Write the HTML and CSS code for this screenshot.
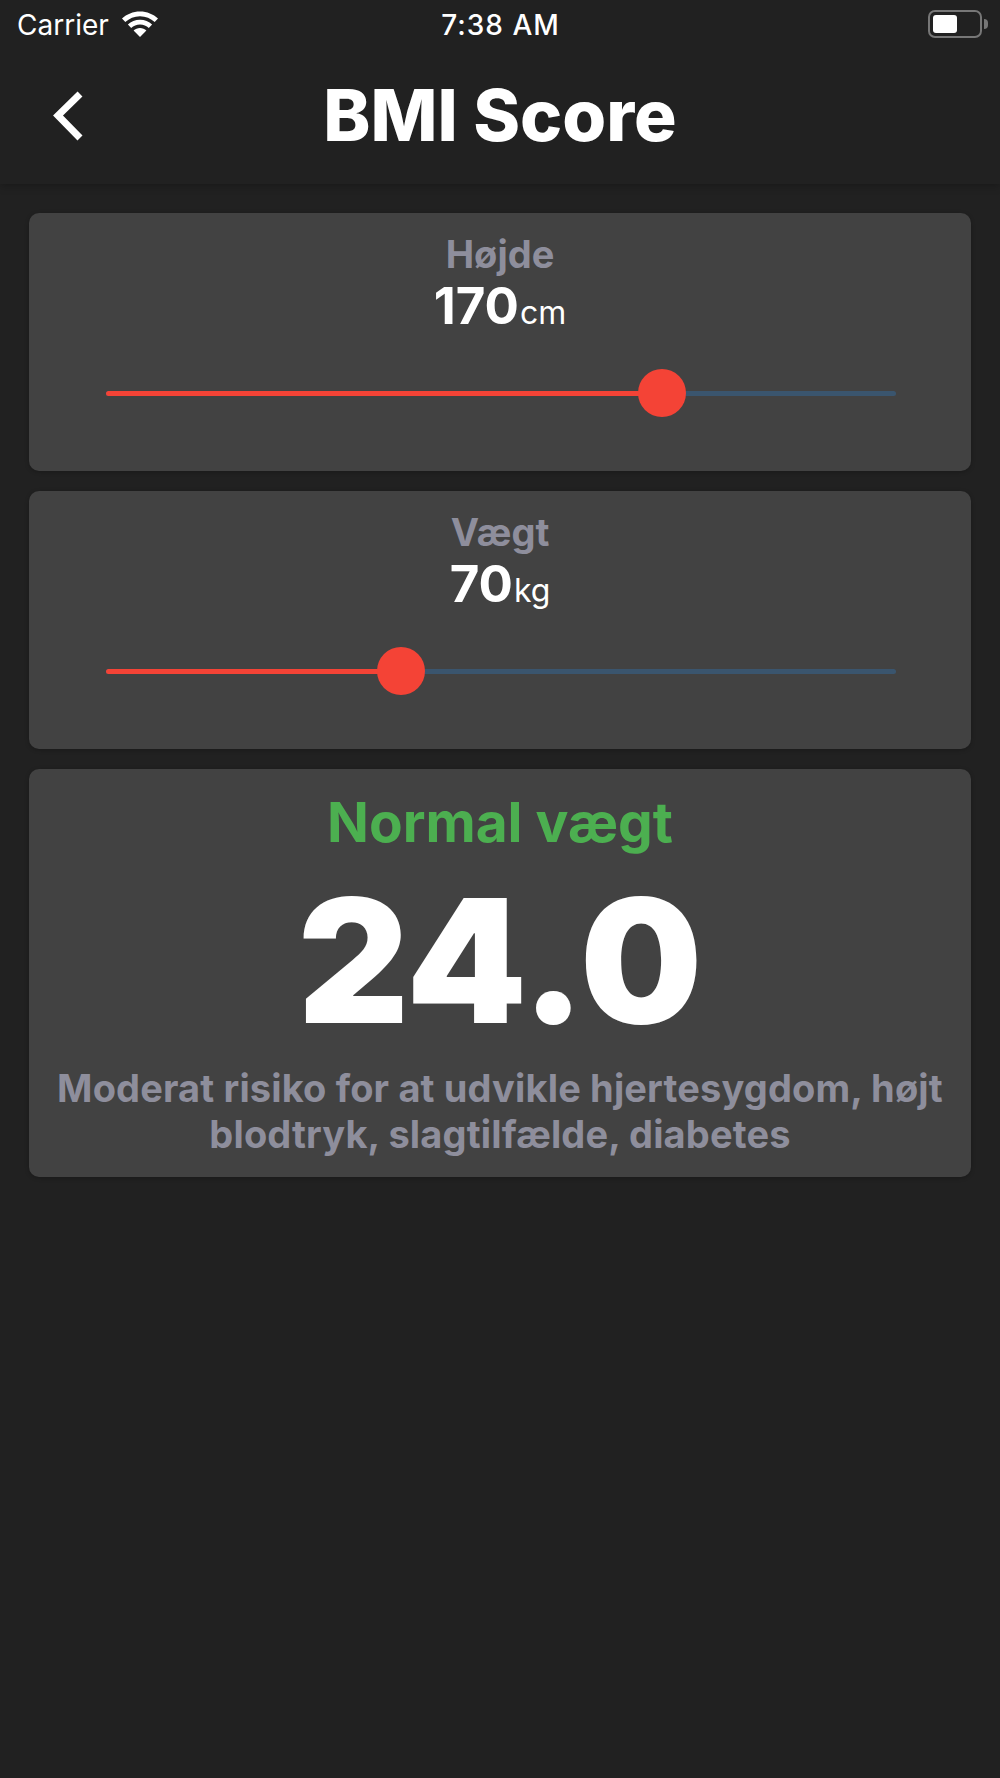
FILE: index.html
```html
<!DOCTYPE html>
<html lang="da">
<head>
<meta charset="utf-8">
<title>BMI Score</title>
<link rel="stylesheet" href="styles.css">
</head>
<body>
<header class="top">
  <div class="status">
    <div class="status-left">
      <span class="carrier">Carrier</span>
      <svg class="wifi" width="38" height="28" viewBox="0 0 38 28"><path fill="#fff" d="M19 1.500C12 1.500 5.700 4.200 1 8.500l3.300 3.500C8.200 8.400 13.300 6.200 19 6.200s10.800 2.200 14.700 5.800L37 8.500C32.300 4.200 26 1.500 19 1.500z"/><path fill="#fff" d="M19 9.700c-4.700 0-8.900 1.800-12.100 4.700l3.300 3.500c2.300-2.100 5.400-3.500 8.800-3.500s6.500 1.400 8.800 3.500l3.300-3.500C27.900 11.500 23.700 9.700 19 9.700z"/><path fill="#fff" d="M19 18c-2.500 0-4.700 1-6.400 2.500L19 27l6.400-6.500C23.700 19 21.500 18 19 18z"/></svg>
    </div>
    <span class="clock">7:38 AM</span>
    <div class="battery">
      <div class="battery-body"><div class="battery-level"></div></div>
      <div class="battery-cap"></div>
    </div>
  </div>
  <div class="nav">
    <svg class="back" width="32" height="50" viewBox="0 0 32 50"><path fill="none" stroke="#fff" stroke-width="7" d="M28 3 6 24.500 28 47"/></svg>
    <h1 class="title">BMI Score</h1>
  </div>
</header>
<main class="content">
  <section class="card slider-card">
    <div class="label">Højde</div>
    <div class="value"><span class="num">170</span><span class="unit">cm</span></div>
    <div class="slider">
      <div class="track"><div class="fill" style="width:70.400%"></div></div>
      <div class="thumb" style="left:70.400%"></div>
    </div>
  </section>
  <section class="card slider-card">
    <div class="label">Vægt</div>
    <div class="value"><span class="num">70</span><span class="unit">kg</span></div>
    <div class="slider">
      <div class="track"><div class="fill" style="width:37.300%"></div></div>
      <div class="thumb" style="left:37.300%"></div>
    </div>
  </section>
  <section class="card result">
    <div class="category">Normal vægt</div>
    <div class="score">24.0</div>
    <p class="desc">Moderat risiko for at udvikle hjertesygdom, højt blodtryk, slagtilfælde, diabetes</p>
  </section>
</main>
</body>
</html>
```

FILE: styles.css
```css
* { box-sizing: border-box; }
html, body { margin: 0; padding: 0; }
body {
  width: 1000px;
  height: 1778px;
  background: #212121;
  color: #fff;
  font-family: Inter, "Liberation Sans", sans-serif;
  overflow: hidden;
}
.top {
  height: 184px;
  background: #212121;
  box-shadow: 0 2px 8px rgba(0, 0, 0, 0.25);
  position: relative;
}
.status {
  height: 50px;
  padding: 0 12px 0 17px;
  display: grid;
  grid-template-columns: 1fr auto 1fr;
  align-items: center;
}
.status-left { display: flex; align-items: center; gap: 12px; }
.carrier { font-size: 28px; line-height: 50px; color: #fff; }
.wifi { margin-top: -3px; }
.clock { font-size: 28px; font-weight: 500; line-height: 50px; letter-spacing: 1px; margin-left: -4px; }
.battery { display: flex; align-items: center; justify-content: flex-end; gap: 2px; margin-top: -2px; }
.battery-body {
  width: 54px;
  height: 28px;
  border: 2px solid #777;
  border-radius: 7px;
  padding: 3px;
}
.battery-level { width: 24px; height: 100%; background: #fff; border-radius: 3px; }
.battery-cap {
  width: 4px;
  height: 10px;
  background: #777;
  border-radius: 0 5px 5px 0;
}
.nav {
  height: 134px;
  display: flex;
  align-items: center;
  justify-content: center;
  position: relative;
}
.back { position: absolute; left: 52px; top: 41px; }
.title { margin: 0; font-size: 71px; font-weight: 800; line-height: 1; margin-top: -3px; }
.content {
  padding: 29px 29px 0;
  display: flex;
  flex-direction: column;
  gap: 20px;
}
.card {
  background: #424242;
  border-radius: 10px;
  box-shadow: 0 1px 4px rgba(0, 0, 0, 0.25);
  text-align: center;
}
.slider-card { height: 258px; padding-top: 20px; }
.label { font-size: 38px; font-weight: 700; line-height: 42px; color: #8e8e9c; }
.value { display: flex; justify-content: center; align-items: baseline; gap: 1px; line-height: 56px; margin-top: 3px; }
.num { font-size: 51px; font-weight: 700; }
.unit { font-size: 32px; font-weight: 400; }
.slider { position: relative; margin: 28px 75px 0 77px; height: 48px; display: flex; align-items: center; }
.track { width: 100%; height: 5px; border-radius: 3px; background: #3a556e; overflow: hidden; }
.fill { height: 100%; background: #f44336; }
.thumb {
  position: absolute;
  top: 0;
  width: 48px;
  height: 48px;
  margin-left: -24px;
  border-radius: 50%;
  background: #f44336;
}
.result { height: 408px; padding: 21px 14px 0; }
.category { font-size: 55px; font-weight: 700; line-height: 64px; color: #4caf50; }
.score { font-size: 172px; font-weight: 900; line-height: 200px; margin-top: 6px; }
.desc { margin: 5px 0 0; font-size: 38px; font-weight: 700; line-height: 46px; letter-spacing: 0.15px; color: #8e8e9c; }
```
